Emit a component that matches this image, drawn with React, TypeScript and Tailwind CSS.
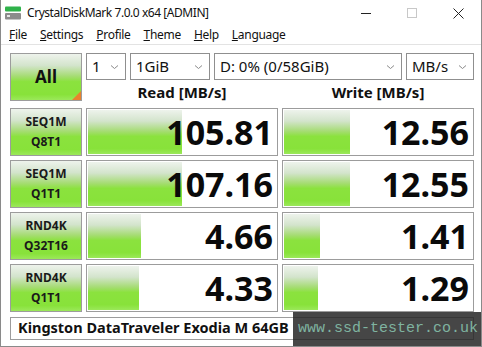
import React from 'react';

type Row = { l1: string; l2: string; read: string; readPct: number; write: string; writePct: number };

const rows: Row[] = [
  { l1: 'SEQ1M', l2: 'Q8T1', read: '105.81', readPct: 50, write: '12.56', writePct: 35 },
  { l1: 'SEQ1M', l2: 'Q1T1', read: '107.16', readPct: 50, write: '12.55', writePct: 35 },
  { l1: 'RND4K', l2: 'Q32T16', read: '4.66', readPct: 28, write: '1.41', writePct: 19 },
  { l1: 'RND4K', l2: 'Q1T1', read: '4.33', readPct: 27, write: '1.29', writePct: 18 },
];

const green =
  'bg-[linear-gradient(to_bottom,#eef3ec_0%,#d3e4cc_25%,#a6dc74_48%,#8be23e_60%,#88e23a_88%,#9be85a_100%)]';

function Chevron() {
  return (
    <svg width="9" height="6" viewBox="0 0 9 6" className="shrink-0">
      <path d="M1 1.5 L4.5 4.5 L8 1.5" fill="none" stroke="#8a8a8a" strokeWidth="1" />
    </svg>
  );
}

function Select({ w, text }: { w: string; text: string }) {
  return (
    <div className={`${w} h-[27px] border border-[#8f8f8f] bg-white flex items-center justify-between pl-[5px] pr-[6px] text-[15px] text-[#111]`}>
      <span>{text}</span>
      <Chevron />
    </div>
  );
}

function Bar({ value, pct }: { value: string; pct: number }) {
  return (
    <div className="relative h-[48px] border border-[#9c9c9c] bg-white p-[1px]">
      <div className="h-full relative">
        <div className={`absolute left-0 top-0 bottom-0 ${green}`} style={{ width: `${pct}%` }} />
        <div className="relative h-full flex items-center justify-end pr-[3px] text-[34px] font-bold text-[#0a0a0a] leading-none">
          {value}
        </div>
      </div>
    </div>
  );
}

export default function App() {
  return (
    <div className="relative w-[482px] h-[347px] overflow-hidden bg-white border-x border-b border-[#8a8a8a] font-['Noto_Sans',sans-serif] text-[#111]">
      {/* title bar */}
      <div className="h-[26px] flex items-center">
        <svg width="16" height="14" viewBox="0 0 16 14" className="ml-[4px] mr-[6px]">
          <rect x="0" y="0.5" width="16" height="5" rx="1" fill="#2fb24a" />
          <rect x="0" y="7" width="16" height="6.5" rx="1" fill="#8c8c8c" />
          <rect x="2" y="9" width="3" height="2" fill="#e6e6e6" />
        </svg>
        <span className="text-[12px] tracking-[-0.45px]">CrystalDiskMark 7.0.0 x64 [ADMIN]</span>
        <div className="ml-auto flex items-center h-full">
          <div className="w-[46px] flex justify-center">
            <div className="w-[10px] h-[1px] bg-[#222]" />
          </div>
          <div className="w-[46px] flex justify-center">
            <div className="w-[10px] h-[10px] border border-[#c8c8c8]" />
          </div>
          <div className="w-[46px] flex justify-center">
            <svg width="11" height="11" viewBox="0 0 11 11">
              <path d="M0.5 0.5 L10.5 10.5 M10.5 0.5 L0.5 10.5" stroke="#222" strokeWidth="1" />
            </svg>
          </div>
        </div>
      </div>

      {/* menu bar */}
      <div className="h-[19px] flex items-center gap-[13px] pl-[8px] text-[12px] tracking-[-0.3px] border-b border-[#e3e3e3]">
        <span><u>F</u>ile</span>
        <span><u>S</u>ettings</span>
        <span><u>P</u>rofile</span>
        <span><u>T</u>heme</span>
        <span><u>H</u>elp</span>
        <span><u>L</u>anguage</span>
      </div>

      {/* main grid */}
      <div className="pl-[9px] pt-[8px] grid grid-cols-[72px_192px_192px] gap-x-[4px] gap-y-[4px]">
        <div className={`relative h-[48px] border border-[#9c9c9c] flex items-center justify-center text-[17px] font-bold ${green}`}>
          All
          <div className="absolute right-0 bottom-0 w-0 h-0 border-l-[9px] border-l-transparent border-b-[9px] border-b-[#e8822e]" />
        </div>
        <div className="col-span-2 flex flex-col">
          <div className="flex gap-[4px]">
            <Select w="w-[40px]" text="1" />
            <Select w="w-[80px]" text="1GiB" />
            <Select w="w-[188px]" text="D: 0% (0/58GiB)" />
            <Select w="w-[68px]" text="MB/s" />
          </div>
          <div className="grid grid-cols-2 gap-x-[4px] flex-1 items-center">
            <div className="text-center text-[15px] font-bold pt-[1px]">Read [MB/s]</div>
            <div className="text-center text-[15px] font-bold pt-[1px]">Write [MB/s]</div>
          </div>
        </div>

        {rows.map((r, i) => (
          <React.Fragment key={i}>
            <div className={`h-[48px] border border-[#9c9c9c] flex flex-col items-center justify-center text-[12px] font-bold leading-[20px] text-[#1a1a1a] ${green}`}>
              <span>{r.l1}</span>
              <span>{r.l2}</span>
            </div>
            <Bar value={r.read} pct={r.readPct} />
            <Bar value={r.write} pct={r.writePct} />
          </React.Fragment>
        ))}

        <div className="col-span-3 mt-[1px] h-[23px] border border-[#9c9c9c] bg-white flex items-center pl-[7px] text-[14.5px] font-bold">
          Kingston DataTraveler Exodia M 64GB
        </div>
      </div>

      {/* watermark */}
      <div className="absolute left-[292px] top-[312px] right-0 bottom-0 bg-[rgba(38,38,38,0.85)] flex items-center pl-[5px] font-['Liberation_Mono',monospace] text-[15px] text-[#7fb3a0]">
        www.ssd-tester.co.uk
      </div>
    </div>
  );
}
